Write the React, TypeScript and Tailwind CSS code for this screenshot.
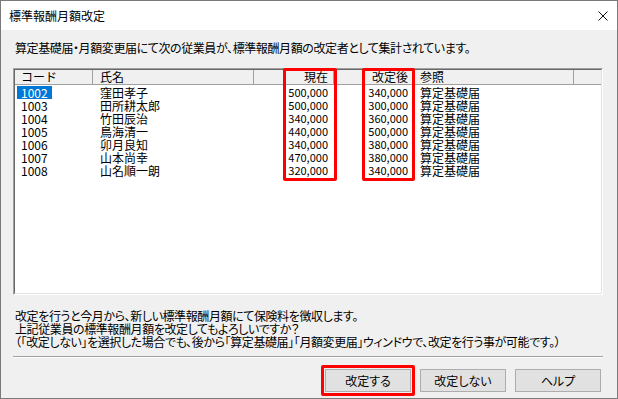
import React from "react";

const rows = [
  { code: "1002", name: "窪田孝子", cur: "500,000", next: "340,000", ref: "算定基礎届", sel: true },
  { code: "1003", name: "田所耕太郎", cur: "500,000", next: "300,000", ref: "算定基礎届" },
  { code: "1004", name: "竹田辰治", cur: "340,000", next: "360,000", ref: "算定基礎届" },
  { code: "1005", name: "鳥海清一", cur: "440,000", next: "500,000", ref: "算定基礎届" },
  { code: "1006", name: "卯月良知", cur: "340,000", next: "380,000", ref: "算定基礎届" },
  { code: "1007", name: "山本尚幸", cur: "470,000", next: "380,000", ref: "算定基礎届" },
  { code: "1008", name: "山名順一朗", cur: "320,000", next: "340,000", ref: "算定基礎届" },
];

export default function App() {
  return (
    <div className="w-[618px] h-[399px] border border-[#7a7a7a] bg-[#f0f0f0] flex flex-col text-black text-[12px] font-['Noto_Sans_CJK_JP','Noto_Sans_CJK_SC',sans-serif] overflow-hidden">
      {/* title bar */}
      <div className="h-[29px] bg-white flex items-center justify-between pl-[8px] pr-[9px] shrink-0">
        <span className="leading-[14px]">標準報酬月額改定</span>
        <svg width="10" height="10" viewBox="0 0 10 10" className="shrink-0">
          <path d="M0.5 0.5 L9.5 9.5 M9.5 0.5 L0.5 9.5" stroke="#111" strokeWidth="1" fill="none" />
        </svg>
      </div>

      {/* body */}
      <div className="flex flex-col px-[12px]">
        <p className="mt-[10px] ml-[2px] leading-[15px] tracking-[-0.4px] [font-feature-settings:'palt']">
          算定基礎届・月額変更届にて次の従業員が、標準報酬月額の改定者として集計されています。
        </p>

        {/* list box */}
        <div className="relative mt-[13px] w-[590px] h-[227px] border border-t-[#a0a0a0] border-l-[#a0a0a0] border-b-white border-r-white">
          <div className="w-full h-full border border-t-[#696969] border-l-[#696969] border-b-[#e3e3e3] border-r-[#e3e3e3] bg-white flex flex-col">
            {/* header */}
            <div className="flex h-[15px] bg-[#f0f0f0] border-b border-[#a0a0a0] leading-[14px] shrink-0">
              <div className="w-[78px] pl-[6px] border-r border-[#a0a0a0]">コード</div>
              <div className="w-[161px] pl-[7px] border-r border-[#a0a0a0]">氏名</div>
              <div className="w-[80px] pr-[5px] text-right border-r border-[#a0a0a0]">現在</div>
              <div className="w-[80px] pr-[5px] text-right border-r border-[#a0a0a0]">改定後</div>
              <div className="w-[160px] pl-[6px] border-r border-[#a0a0a0]">参照</div>
              <div className="flex-1"></div>
            </div>
            {/* rows */}
            <div className="flex flex-col pt-[1px]">
              {rows.map((r) => (
                <div key={r.code} className="flex h-[13px] leading-[13px]">
                  <div className="w-[78px] pl-[2px]">
                    {r.sel ? (
                      <span className="inline-block px-[4px] bg-[#0078d7] text-white">{r.code}</span>
                    ) : (
                      <span className="inline-block px-[4px]">{r.code}</span>
                    )}
                  </div>
                  <div className="w-[161px] pl-[7px]">{r.name}</div>
                  <div className="w-[80px] pr-[6px] text-right text-[11px]">{r.cur}</div>
                  <div className="w-[80px] pr-[6px] text-right text-[11px]">{r.next}</div>
                  <div className="w-[160px] pl-[6px]">{r.ref}</div>
                </div>
              ))}
            </div>
          </div>
          {/* red annotation boxes */}
          <div className="absolute left-[269px] top-[-1px] w-[54px] h-[113px] border-[3px] border-[#ff0000] rounded-[2px]"></div>
          <div className="absolute left-[348px] top-[-1px] w-[53px] h-[113px] border-[3px] border-[#ff0000] rounded-[2px]"></div>
        </div>

        {/* message */}
        <div className="mt-[14px] ml-[2px] leading-[13px] tracking-[-0.4px] [font-feature-settings:'palt'] flex flex-col">
          <span>改定を行うと今月から、新しい標準報酬月額にて保険料を徴収します。</span>
          <span>上記従業員の標準報酬月額を改定してもよろしいですか？</span>
          <span>（「改定しない」を選択した場合でも、後から「算定基礎届」「月額変更届」ウィンドウで、改定を行う事が可能です。）</span>
        </div>

        {/* separator */}
        <div className="mt-[8px] w-[590px] h-[2px] border-t border-t-[#a0a0a0] border-b border-b-white"></div>

        {/* buttons */}
        <div className="mt-[11px] w-[590px] flex justify-end gap-[9px] pr-[2px]">
          <div className="relative">
            <button className="w-[86px] h-[23px] bg-[#e1e1e1] border border-[#adadad] leading-[14px] [font-feature-settings:'palt']">
              改定する
            </button>
            <div className="absolute inset-[-4px] border-[3px] border-[#ff0000] rounded-[2px] pointer-events-none"></div>
          </div>
          <button className="w-[86px] h-[23px] bg-[#e1e1e1] border border-[#adadad] leading-[14px] [font-feature-settings:'palt']">
            改定しない
          </button>
          <button className="w-[86px] h-[23px] bg-[#e1e1e1] border border-[#adadad] leading-[14px] [font-feature-settings:'palt']">
            ヘルプ
          </button>
        </div>
      </div>
    </div>
  );
}
